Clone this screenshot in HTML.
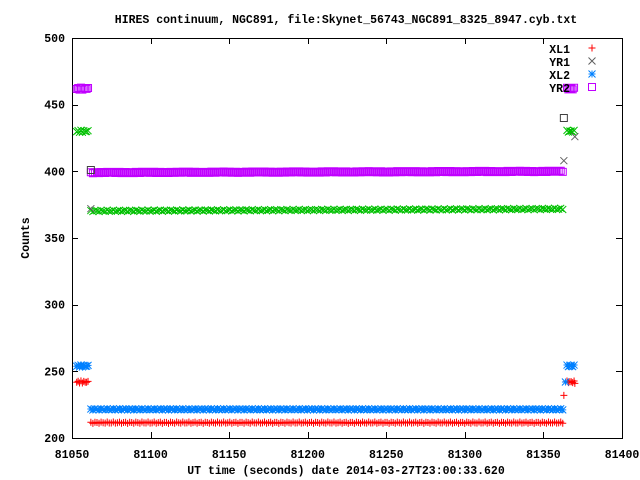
<!DOCTYPE html>
<html><head><meta charset="utf-8"><style>
html,body{margin:0;padding:0;background:#fff;width:640px;height:480px;overflow:hidden}
svg{display:block}
text{font-family:"Liberation Mono",monospace;font-weight:bold;font-size:11.5px;fill:#000}
</style></head><body>
<svg id="s" width="640" height="480" xmlns="http://www.w3.org/2000/svg">
<rect width="640" height="480" fill="#fff"/>
<text x="346" y="23" text-anchor="middle">HIRES continuum, NGC891, file:Skynet_56743_NGC891_8325_8947.cyb.txt</text>
<g text-anchor="end" id="yl"></g>
<g text-anchor="middle" id="xl"></g>
<text x="346" y="474" text-anchor="middle">UT time (seconds) date 2014-03-27T23:00:33.620</text>
<text transform="translate(29,238) rotate(-90)" text-anchor="middle">Counts</text>
<g id="ticks" stroke="#000" stroke-width="1"></g>
<rect x="72.5" y="38.5" width="550" height="400" fill="none" stroke="#000" stroke-width="1"/>
<g id="pts" stroke-width="1" fill="none"></g>
<g text-anchor="end">
<text x="570" y="53">XL1</text><text x="570" y="66">YR1</text><text x="570" y="79">XL2</text><text x="570" y="92">YR2</text>
</g>
</svg>
<script>
var NS="http://www.w3.org/2000/svg";
function X(v){return 72+(v-81050)*550/350;}
function Y(v){return 438-(v-200)*400/300;}
var yl=document.getElementById('yl'),xl=document.getElementById('xl'),tk=document.getElementById('ticks');
function el(p,t,a,txt){var e=document.createElementNS(NS,t);for(var k in a)e.setAttribute(k,a[k]);if(txt)e.textContent=txt;p.appendChild(e);return e;}
var d="";
[200,250,300,350,400,450,500].forEach(function(v){var y=Math.round(Y(v))+0.5;d+="M72,"+y+"h6M622,"+y+"h-6";el(yl,'text',{x:65,y:Y(v)+4},String(v));});
for(var v=81050;v<=81400;v+=50){var x=Math.round(X(v))+0.5;d+="M"+x+",438v-6M"+x+",38v6";el(xl,'text',{x:X(v),y:458},String(v));}
el(tk,'path',{d:d});
var pts=document.getElementById('pts');
var s=3.5;
function mk(type,x,y){
 if(type==0)return "M"+(x-s)+","+y+"h"+(2*s)+"M"+x+","+(y-s)+"v"+(2*s);
 if(type==1)return "M"+(x-s)+","+(y-s)+"l"+(2*s)+","+(2*s)+"M"+(x-s)+","+(y+s)+"l"+(2*s)+","+(-2*s);
 if(type==2)return mk(0,x,y)+mk(1,x,y);
 return "M"+(x-s)+","+(y-s)+"h"+(2*s)+"v"+(2*s)+"h"+(-2*s)+"z";
}
var cols=["#ff0000","#00c000","#0080ff","#c000ff"];
var side=[242,430,254,462], base=[211.5,371,221.5,399.5];
for(var t=0;t<4;t++){
 var p="";
 for(var v=81053;v<=81061;v+=0.9){p+=mk(t,X(v),Y(side[t]+(Math.sin(v*3)*0.8)));}
 for(var v=81365;v<=81370;v+=0.9){p+=mk(t,X(v),Y(side[t]+(Math.cos(v*3)*0.8)));}
 for(var v=81062;v<=81363;v+=1.3){var w=base[t]+Math.sin(v*1.7)*0.5+(t==3?(v-81200)*0.003:0)+(t==1?(v-81200)*0.005:0);p+=mk(t,X(v),Y(w));}
 el(pts,'path',{d:p,stroke:cols[t]});
}
el(pts,'path',{d:mk(3,X(81062),Y(401))+mk(3,X(81363),Y(440)),stroke:"#404040"});
el(pts,'path',{d:mk(1,X(81062),Y(372))+mk(1,X(81363),Y(408))+mk(1,X(81370),Y(426)),stroke:"#606060"});
el(pts,'path',{d:mk(0,X(81363),Y(232))+mk(0,X(81370),Y(241)),stroke:"#ff0000"});
el(pts,'path',{d:mk(2,X(81364),Y(242)),stroke:"#0080ff"});
el(pts,'path',{d:mk(0,592,48),stroke:cols[0]});
el(pts,'path',{d:mk(1,592,61),stroke:"#606060"});
el(pts,'path',{d:mk(2,592,74),stroke:cols[2]});
el(pts,'path',{d:mk(3,592,87),stroke:cols[3]});
</script>
</body></html>
